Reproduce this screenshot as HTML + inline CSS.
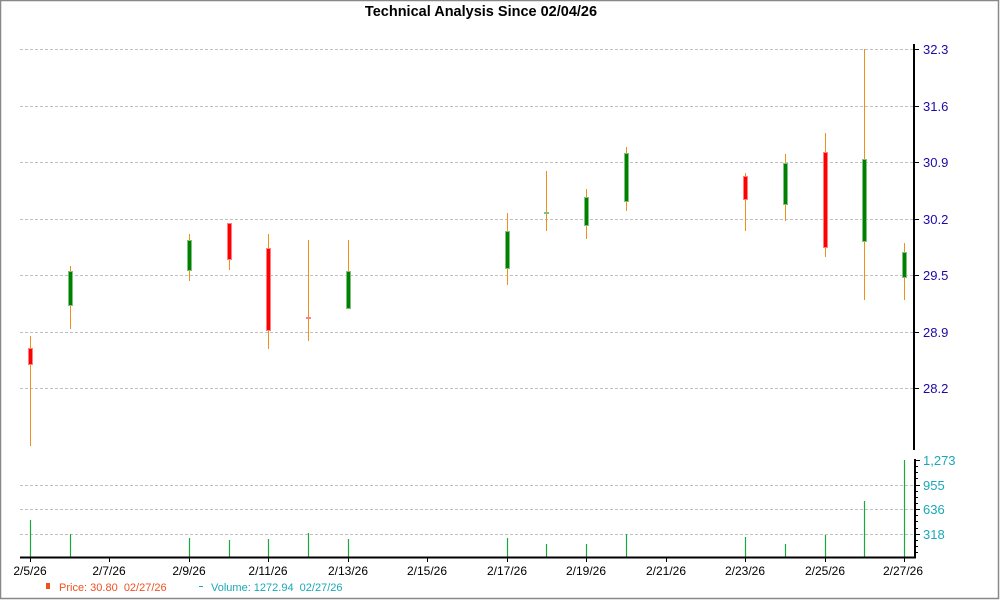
<!DOCTYPE html>
<html><head><meta charset="utf-8"><style>
html,body{margin:0;padding:0;background:#fff}
svg{display:block}
text{font-family:"Liberation Sans",Arial,sans-serif}
</style></head><body>
<svg width="1000" height="600" viewBox="0 0 1000 600" xmlns="http://www.w3.org/2000/svg">
<rect x="0.5" y="0.5" width="998" height="598" fill="#fff" stroke="#888" stroke-width="1.5"/>
<text x="481" y="16" text-anchor="middle" font-size="14.5" font-weight="bold" fill="#000">Technical Analysis Since 02/04/26</text>
<g stroke="#c0c0c0" stroke-dasharray="3,2" stroke-width="1">
<line x1="20" y1="49.5" x2="913" y2="49.5"/>
<line x1="20" y1="106.5" x2="913" y2="106.5"/>
<line x1="20" y1="162.5" x2="913" y2="162.5"/>
<line x1="20" y1="219.5" x2="913" y2="219.5"/>
<line x1="20" y1="275.5" x2="913" y2="275.5"/>
<line x1="20" y1="332.5" x2="913" y2="332.5"/>
<line x1="20" y1="388.5" x2="913" y2="388.5"/>
<line x1="20" y1="485.5" x2="913" y2="485.5"/>
<line x1="20" y1="509.5" x2="913" y2="509.5"/>
<line x1="20" y1="534.5" x2="913" y2="534.5"/>
</g>
<line x1="914" y1="44" x2="914" y2="450" stroke="#000" stroke-width="2"/>
<g stroke="#000" stroke-width="1">
<line x1="914" y1="49.5" x2="919" y2="49.5"/><line x1="914" y1="106.5" x2="919" y2="106.5"/>
<line x1="914" y1="162.5" x2="919" y2="162.5"/><line x1="914" y1="219.5" x2="919" y2="219.5"/>
<line x1="914" y1="275.5" x2="919" y2="275.5"/><line x1="914" y1="332.5" x2="919" y2="332.5"/>
<line x1="914" y1="388.5" x2="919" y2="388.5"/>
</g>
<g font-size="13" fill="#1a0aa8">
<text x="923" y="54">32.3</text><text x="923" y="111">31.6</text><text x="923" y="167">30.9</text>
<text x="923" y="224">30.2</text><text x="923" y="280">29.5</text><text x="923" y="337">28.9</text>
<text x="923" y="393">28.2</text>
</g>
<g stroke="#f0901a" stroke-width="1">
<line x1="30.5" y1="336" x2="30.5" y2="446"/>
<line x1="70.5" y1="266" x2="70.5" y2="329"/>
<line x1="189.5" y1="234" x2="189.5" y2="281"/>
<line x1="229.5" y1="224" x2="229.5" y2="270"/>
<line x1="268.5" y1="234" x2="268.5" y2="349"/>
<line x1="308.5" y1="240" x2="308.5" y2="341"/>
<line x1="348.5" y1="240" x2="348.5" y2="309"/>
<line x1="507.5" y1="213" x2="507.5" y2="285"/>
<line x1="546.5" y1="171" x2="546.5" y2="231"/>
<line x1="586.5" y1="189" x2="586.5" y2="239"/>
<line x1="626.5" y1="147" x2="626.5" y2="211"/>
<line x1="745.5" y1="173" x2="745.5" y2="231"/>
<line x1="785.5" y1="154" x2="785.5" y2="221"/>
<line x1="825.5" y1="133" x2="825.5" y2="257"/>
<line x1="864.5" y1="49" x2="864.5" y2="300"/>
<line x1="904.5" y1="243" x2="904.5" y2="300"/>
</g>
<g stroke-width="1">
<rect x="28.5" y="348.5" width="4" height="16" fill="#ff0000" stroke="#ff8080"/>
<rect x="68.5" y="271.5" width="4" height="34" fill="#008000" stroke="#80c080"/>
<rect x="187.5" y="240.5" width="4" height="30" fill="#008000" stroke="#80c080"/>
<rect x="227.5" y="223.5" width="4" height="36" fill="#ff0000" stroke="#ff8080"/>
<rect x="266.5" y="248.5" width="4" height="82" fill="#ff0000" stroke="#ff8080"/>
<rect x="306.5" y="317.5" width="4" height="1" fill="#ff0000" stroke="#ff8080"/>
<rect x="346.5" y="271.5" width="4" height="37" fill="#008000" stroke="#80c080"/>
<rect x="505.5" y="231.5" width="4" height="37" fill="#008000" stroke="#80c080"/>
<rect x="544.5" y="212.5" width="4" height="1" fill="#008000" stroke="#80c080"/>
<rect x="584.5" y="197.5" width="4" height="28" fill="#008000" stroke="#80c080"/>
<rect x="624.5" y="153.5" width="4" height="48" fill="#008000" stroke="#80c080"/>
<rect x="743.5" y="176.5" width="4" height="23" fill="#ff0000" stroke="#ff8080"/>
<rect x="783.5" y="163.5" width="4" height="41" fill="#008000" stroke="#80c080"/>
<rect x="823.5" y="152.5" width="4" height="95" fill="#ff0000" stroke="#ff8080"/>
<rect x="862.5" y="159.5" width="4" height="82" fill="#008000" stroke="#80c080"/>
<rect x="902.5" y="252.5" width="4" height="25" fill="#008000" stroke="#80c080"/>
</g>
<g stroke="#1aaa3a" stroke-width="1.2">
<line x1="30.5" y1="520" x2="30.5" y2="557"/>
<line x1="70.5" y1="534" x2="70.5" y2="557"/>
<line x1="189.5" y1="538" x2="189.5" y2="557"/>
<line x1="229.5" y1="540" x2="229.5" y2="557"/>
<line x1="268.5" y1="539" x2="268.5" y2="557"/>
<line x1="308.5" y1="533" x2="308.5" y2="557"/>
<line x1="348.5" y1="539" x2="348.5" y2="557"/>
<line x1="507.5" y1="538" x2="507.5" y2="557"/>
<line x1="546.5" y1="544" x2="546.5" y2="557"/>
<line x1="586.5" y1="544" x2="586.5" y2="557"/>
<line x1="626.5" y1="534" x2="626.5" y2="557"/>
<line x1="745.5" y1="537" x2="745.5" y2="557"/>
<line x1="785.5" y1="544" x2="785.5" y2="557"/>
<line x1="825.5" y1="535" x2="825.5" y2="557"/>
<line x1="864.5" y1="501" x2="864.5" y2="557"/>
<line x1="904.5" y1="460" x2="904.5" y2="557"/>
</g>
<line x1="20" y1="557.5" x2="916" y2="557.5" stroke="#000" stroke-width="2"/>
<line x1="915" y1="459" x2="915" y2="558" stroke="#000" stroke-width="2"/>
<g stroke="#000" stroke-width="1">
<line x1="915" y1="460.5" x2="920" y2="460.5"/><line x1="915" y1="466.5" x2="918" y2="466.5"/>
<line x1="915" y1="472.5" x2="918" y2="472.5"/><line x1="915" y1="478.5" x2="918" y2="478.5"/>
<line x1="915" y1="485.5" x2="920" y2="485.5"/><line x1="915" y1="491.5" x2="918" y2="491.5"/>
<line x1="915" y1="497.5" x2="918" y2="497.5"/><line x1="915" y1="503.5" x2="918" y2="503.5"/>
<line x1="915" y1="509.5" x2="920" y2="509.5"/><line x1="915" y1="515.5" x2="918" y2="515.5"/>
<line x1="915" y1="521.5" x2="918" y2="521.5"/><line x1="915" y1="528.5" x2="918" y2="528.5"/>
<line x1="915" y1="534.5" x2="920" y2="534.5"/><line x1="915" y1="540.5" x2="918" y2="540.5"/>
<line x1="915" y1="546.5" x2="918" y2="546.5"/><line x1="915" y1="552.5" x2="918" y2="552.5"/>
</g>
<g font-size="13" fill="#1aa8b8">
<text x="923" y="465">1,273</text><text x="923" y="490">955</text>
<text x="923" y="514">636</text><text x="923" y="539">318</text>
</g>
<g stroke="#000" stroke-width="1">
<line x1="30.5" y1="557" x2="30.5" y2="562"/><line x1="109.5" y1="557" x2="109.5" y2="562"/>
<line x1="189.5" y1="557" x2="189.5" y2="562"/><line x1="268.5" y1="557" x2="268.5" y2="562"/>
<line x1="348.5" y1="557" x2="348.5" y2="562"/><line x1="427.5" y1="557" x2="427.5" y2="562"/>
<line x1="507.5" y1="557" x2="507.5" y2="562"/><line x1="586.5" y1="557" x2="586.5" y2="562"/>
<line x1="666.5" y1="557" x2="666.5" y2="562"/><line x1="745.5" y1="557" x2="745.5" y2="562"/>
<line x1="825.5" y1="557" x2="825.5" y2="562"/><line x1="904.5" y1="557" x2="904.5" y2="562"/>
</g>
<g font-size="12" fill="#000" text-anchor="middle">
<text x="30" y="575">2/5/26</text><text x="109" y="575">2/7/26</text><text x="189" y="575">2/9/26</text>
<text x="268" y="575">2/11/26</text><text x="348" y="575">2/13/26</text><text x="427" y="575">2/15/26</text>
<text x="507" y="575">2/17/26</text><text x="586" y="575">2/19/26</text><text x="666" y="575">2/21/26</text>
<text x="745" y="575">2/23/26</text><text x="825" y="575">2/25/26</text><text x="903" y="575">2/27/26</text>
</g>
<rect x="46" y="583" width="4" height="6" fill="#f05020"/>
<text x="59" y="591" font-size="11" fill="#f05020">Price: 30.80&#160;&#160;02/27/26</text>
<line x1="199" y1="586.5" x2="203" y2="586.5" stroke="#1aa8b8" stroke-width="1"/>
<text x="211" y="591" font-size="11" fill="#1aa8b8">Volume: 1272.94&#160;&#160;02/27/26</text>
</svg>
</body></html>
